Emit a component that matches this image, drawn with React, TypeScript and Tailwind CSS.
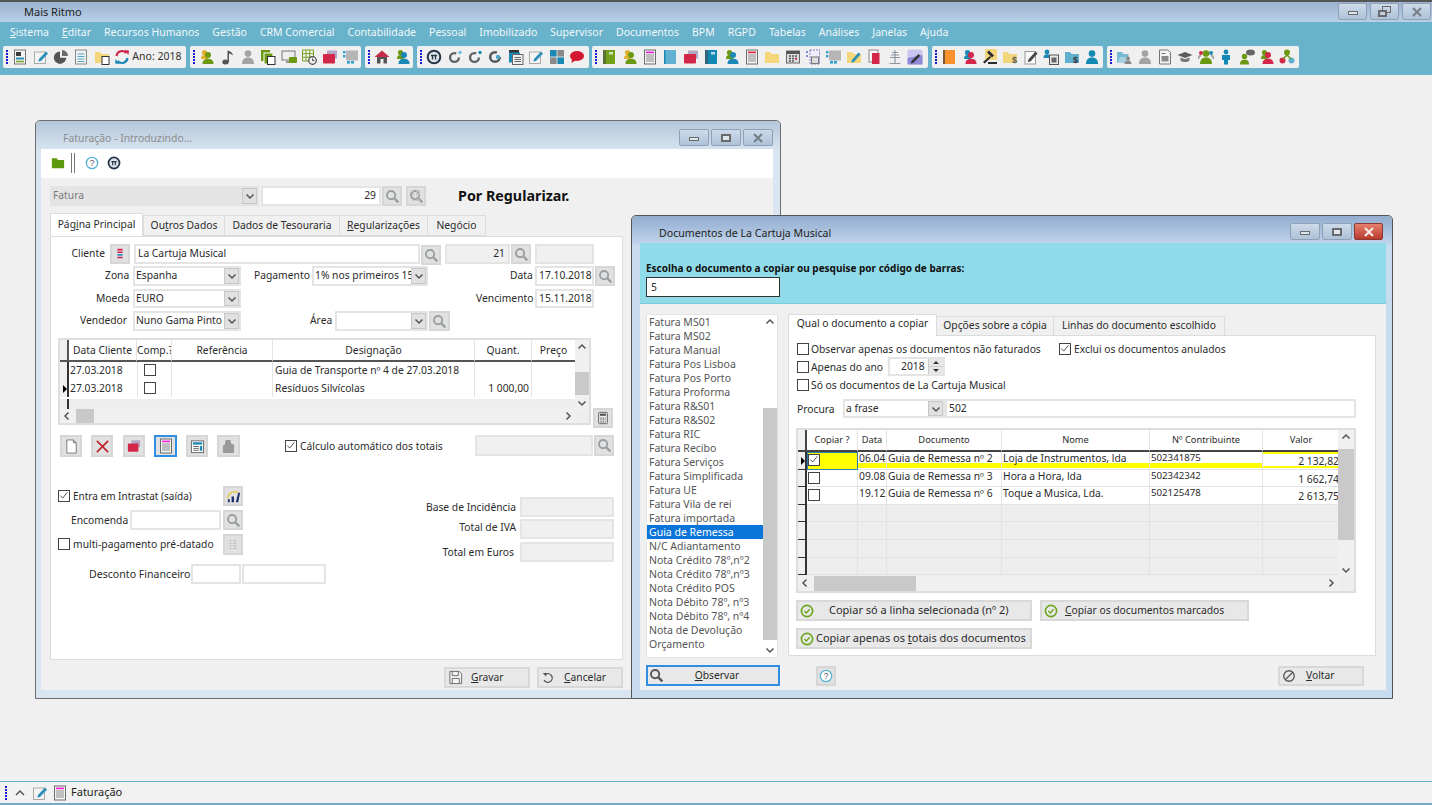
import React from "react";

type P = { className?: string; children?: React.ReactNode };

const Txt = ({ className = "", children }: P) => (
  <span className={`absolute whitespace-nowrap leading-[14px] ${className}`}>{children}</span>
);

const Field = ({ className = "", children }: P) => (
  <div className={`absolute border-2 border-[#e4e4e4] bg-white pl-[2px] leading-[15px] overflow-hidden whitespace-nowrap ${className}`}>{children}</div>
);

const Chevron = ({ up, left, right }: { up?: boolean; left?: boolean; right?: boolean }) => (
  <svg viewBox="0 0 10 10" className={`h-[10px] w-[10px] ${up ? "rotate-180" : ""} ${left ? "rotate-90" : ""} ${right ? "-rotate-90" : ""}`}>
    <path d="M1.5 3.5 5 7l3.5-3.5" fill="none" stroke="#555" strokeWidth="1.5" />
  </svg>
);

const Combo = ({ className = "", children }: P) => (
  <div className={`absolute border-2 border-[#e4e4e4] bg-white pl-[1px] leading-[15px] whitespace-nowrap overflow-hidden ${className}`}>
    {children}
    <div className="absolute right-0 top-0 bottom-0 w-[15px] bg-[#e1e1e1] border border-[#c8c8c8] flex items-center justify-center">
      <Chevron />
    </div>
  </div>
);

const Lens = ({ color = "#9a9fa2" }: { color?: string }) => (
  <svg viewBox="0 0 16 16" className="h-[15px] w-[15px]">
    <circle cx="6.5" cy="6.5" r="4.4" fill="none" stroke={color} strokeWidth="2" />
    <path d="m10 10 4.2 4.2" stroke={color} strokeWidth="2.6" />
  </svg>
);

const Btn = ({ className = "", children }: P) => (
  <div className={`absolute flex items-center justify-center bg-[#e1e1e1] border-2 border-[#d6d6d6] ${className}`}>{children}</div>
);

const Search = ({ className = "" }: P) => (
  <Btn className={className}>
    <Lens />
  </Btn>
);

const Check = ({ className = "", on }: { className?: string; on?: boolean }) => (
  <div className={`absolute h-[12px] w-[12px] border border-[#444] bg-white ${className}`}>
    {on && (
      <svg viewBox="0 0 12 12" className="h-[10px] w-[10px]">
        <path d="m1.5 5.5 3 3L10 1.5" fill="none" stroke="#555" strokeWidth="1.2" />
      </svg>
    )}
  </div>
);

const OkIcon = () => (
  <svg viewBox="0 0 16 16" className="h-[14px] w-[14px] shrink-0">
    <circle cx="8" cy="8" r="6.4" fill="none" stroke="#6aa51b" strokeWidth="1.8" />
    <path d="m5 8 2.2 2.2L11 6" fill="none" stroke="#6aa51b" strokeWidth="1.5" />
  </svg>
);

const Person = ({ c }: { c: string }) => (
  <>
    <circle cx="8" cy="4.6" r="3.3" fill={c} />
    <path d="M2 15c0-4.2 2-6.4 6-6.4s6 2.2 6 6.4z" fill={c} />
  </>
);

const Person2 = ({ a, b }: { a: string; b: string }) => (
  <>
    <circle cx="5.5" cy="3.6" r="2.6" fill={a} />
    <path d="M2 10c0-3 1-4 3.5-4S9 7 9 10z" fill={a} />
    <circle cx="9" cy="6" r="3" fill={b} />
    <path d="M3.5 15c0-3.6 2-5.2 5.5-5.2s5.5 1.6 5.5 5.2z" fill={b} />
  </>
);

const Book = ({ c }: { c: string }) => (
  <>
    <rect x="2" y="1" width="12" height="14" fill={c} />
    <rect x="2" y="1" width="3" height="14" fill="#4b4b4b" opacity=".55" />
    <rect x="8" y="3" width="4" height="2.5" fill="#fff" opacity=".7" />
  </>
);

const Doc = ({ c }: { c: string }) => (
  <>
    <rect x="2.5" y="1" width="11" height="14" fill="#f4f4f4" stroke="#6b6b6b" />
    <rect x="4" y="2.6" width="8" height="1.6" fill={c} />
    <path d="M4 6h8M4 8h8M4 10h8M4 12h8" stroke="#8a8a8a" />
  </>
);

const Folder = ({ c }: { c: string }) => <path d="M1 3h5l1.5 2H15v9H1z" fill={c} />;

const RedFolder = () => (
  <>
    <rect x="5" y="1.5" width="10" height="8" fill="#b3a6c4" />
    <rect x="1" y="5" width="12" height="9.5" rx="1" fill="#d3274a" />
  </>
);

const Barcode = () => (
  <>
    <path d="M5 1.5v10M7 1.5v10M9 1.5v10M11 1.5v10M13 1.5v10M15 1.5v10" stroke="#7b7b7b" />
    <rect x="1" y="2" width="2.4" height="2.4" fill="#2f9fd0" />
    <rect x="1" y="6" width="2.4" height="2.4" fill="#2f9fd0" />
    <rect x="5" y="12" width="3" height="2.6" fill="#2f9fd0" />
    <rect x="9" y="12" width="3" height="2.6" fill="#2f9fd0" />
  </>
);

const Gear = ({ c }: { c: string }) => (
  <>
    <circle cx="7.5" cy="8.5" r="4.4" fill="none" stroke="#5f6468" strokeWidth="2.4" strokeDasharray="22 5.6" />
    <circle cx="13" cy="3.5" r="1.7" fill={c} />
  </>
);

const Note = () => (
  <>
    <rect x="1.5" y="3" width="11" height="11.5" fill="#f3f3f3" stroke="#a9a9a9" />
    <path d="m6 10 7-7.5 2 2L8 12l-2.6.6z" fill="#2a8fb8" />
  </>
);

const Pi = () => (
  <>
    <circle cx="8" cy="8" r="6.3" fill="#dfe3e8" stroke="#25364a" strokeWidth="2" />
    <path d="M5 6.5h6M6.5 6.5v4M9.5 6.5v4" stroke="#25364a" strokeWidth="1.3" />
  </>
);

const icons: Record<string, React.ReactNode> = {
  sheet: (
    <>
      <rect x="2.5" y="1" width="11" height="14" fill="#f3f3f3" stroke="#777" />
      <rect x="4" y="3" width="5" height="4" fill="#3c3c3c" />
      <rect x="4" y="8.5" width="8" height="2" fill="#2a8fb8" />
      <path d="M4 12.5h8" stroke="#7aa21a" strokeWidth="1.5" />
    </>
  ),
  note: <Note />,
  pie: (
    <>
      <path d="M7 2.5a6.2 6.2 0 1 0 6.2 6.2H7z" fill="#555" />
      <path d="M9 1a6 6 0 0 1 6 6H9z" fill="#6b6b6b" />
    </>
  ),
  page: (
    <>
      <rect x="2.5" y="1" width="11" height="14" fill="#f2f2f2" stroke="#8a8a8a" />
      <path d="M4.5 5h7M4.5 7.5h7M4.5 10h7M4.5 12.5h7" stroke="#5aa7c7" />
    </>
  ),
  folderdoc: (
    <>
      <Folder c="#f3d57c" />
      <rect x="8" y="7.5" width="7" height="8" fill="#fff" stroke="#333" />
    </>
  ),
  sync: (
    <>
      <path d="M2.5 7A5.6 5.6 0 0 1 12.3 4" fill="none" stroke="#d3274a" strokeWidth="2.2" />
      <path d="m10.5 1 4.5.6-.6 4.500z" fill="#d3274a" />
      <path d="M13.5 9A5.6 5.6 0 0 1 3.7 12" fill="none" stroke="#1c88b5" strokeWidth="2.2" />
      <path d="m5.5 15-4.5-.6.6-4.500z" fill="#1c88b5" />
    </>
  ),
  pYG: <Person2 a="#e0b12e" b="#6b9a12" />,
  music: (
    <>
      <ellipse cx="5.5" cy="13" rx="3.2" ry="2.5" fill="#555" />
      <path d="M7.5 13V1.5c2.5.6 5 2 5.5 5-1.3-1.2-3-1.8-4-2V13z" fill="#555" />
    </>
  ),
  pGray: <Person c="#a3a3a3" />,
  docsG: (
    <>
      <rect x="1" y="1" width="9" height="11" fill="#6b9a12" />
      <rect x="4" y="4" width="9" height="11" fill="#6b9a12" stroke="#fff" />
      <rect x="7.5" y="7.5" width="7.5" height="8" fill="#fff" stroke="#333" />
    </>
  ),
  screen: (
    <>
      <rect x="1" y="2" width="13" height="9" fill="#eee" stroke="#777" />
      <path d="M5 13h5" stroke="#777" strokeWidth="1.5" />
      <rect x="8" y="8" width="8" height="6" rx="1" fill="#6b9a12" />
    </>
  ),
  calclock: (
    <>
      <path d="M1.5 1h11v11h-11zM5 1v11M8.6 1v11M1.5 4.6h11M1.5 8.2h11" fill="none" stroke="#7c9f24" />
      <circle cx="11.5" cy="11.5" r="3.8" fill="#eee" stroke="#444" strokeWidth="1.2" />
      <path d="M11.5 9.5v2h1.8" stroke="#444" fill="none" />
    </>
  ),
  redfolder: <RedFolder />,
  barcode: <Barcode />,
  home: (
    <>
      <path d="M0.5 8 8 1.5 15.5 8z" fill="#c62c47" />
      <path d="M3 8h10v6.5H9.5V10h-3v4.5H3z" fill="#555" />
    </>
  ),
  pTeal2: <Person2 a="#6b9a12" b="#1c88b5" />,
  pi: <Pi />,
  gear1: <Gear c="#6cc0dc" />,
  gear2: <Gear c="#1c88b5" />,
  gear3: (
    <>
      <circle cx="8" cy="8" r="4.8" fill="none" stroke="#55595d" strokeWidth="2.6" strokeDasharray="24 6" />
      <circle cx="11" cy="8" r="2.2" fill="#4aa6c9" />
    </>
  ),
  docs: (
    <>
      <rect x="1" y="1" width="10" height="5" fill="#333" />
      <rect x="1" y="3.5" width="11" height="10" fill="#1c88b5" />
      <rect x="4.5" y="5.5" width="10.5" height="10" fill="#f0f0f0" stroke="#666" />
      <path d="M6.5 8.5h6.5M6.5 10.5h6.5M6.5 12.5h6.5" stroke="#666" />
    </>
  ),
  squares: (
    <>
      <rect x="1" y="1" width="6.6" height="6.6" fill="#1c88b5" />
      <rect x="8.4" y="1" width="6.6" height="6.6" fill="#8a8a8a" />
      <rect x="1" y="8.4" width="6.6" height="6.6" fill="#8a8a8a" />
      <rect x="8.4" y="8.4" width="6.6" height="6.6" fill="#1c88b5" />
    </>
  ),
  speech: (
    <>
      <ellipse cx="8" cy="7" rx="7" ry="5" fill="#d3172f" />
      <path d="m3 10-.5 4 4.5-3z" fill="#d3172f" />
    </>
  ),
  bookG: <Book c="#72a01a" />,
  docPink: <Doc c="#f31bd6" />,
  bookB: (
    <>
      <rect x="2" y="1" width="12" height="14" fill="#61b2d2" />
      <rect x="2" y="1" width="1.5" height="14" fill="#1c88b5" />
    </>
  ),
  bookT: <Book c="#1488b4" />,
  docRed: <Doc c="#e11d2a" />,
  folderY: <Folder c="#f5d67a" />,
  cal: (
    <>
      <rect x="1.5" y="2" width="13" height="12" fill="#ddd" stroke="#666" />
      <rect x="1.5" y="2" width="13" height="3" fill="#555" />
      <path d="M4 7h2M7 7h2M10 7h2M4 9.5h2M7 9.5h2M10 9.5h2M4 12h2M7 12h2" stroke="#555" strokeWidth="1.4" />
      <rect x="10" y="9" width="2" height="1.6" fill="#c62c47" />
    </>
  ),
  dotdoc: (
    <>
      <rect x="5" y="1" width="9.5" height="14" fill="#eef" stroke="#8a7fc0" strokeDasharray="2 1" />
      <rect x="6.5" y="8" width="7" height="6.5" fill="#ddd" stroke="#777" />
      <rect x="1" y="2" width="2" height="2" fill="#7a8fd0" />
      <rect x="1" y="6" width="2" height="2" fill="#7a8fd0" />
    </>
  ),
  notefolder: (
    <>
      <Folder c="#f3d57c" />
      <path d="m6 11 6.5-7.5 2 1.8L8 13l-2.6.4z" fill="#2a8fb8" />
    </>
  ),
  reddoc: (
    <>
      <rect x="3" y="1" width="9" height="12" fill="#f6f6f6" stroke="#888" />
      <path d="M6 4h7.5v11H6z" fill="#d3274a" />
    </>
  ),
  antenna: <path d="M8 1v13M5 3.5h6M4 6h8M3 8.5h10M2.5 14.5h11" stroke="#8e9aa3" fill="none" strokeWidth="1.2" />,
  pen: (
    <>
      <rect x="0.5" y="0.5" width="15" height="15" rx="2" fill="#c8c5ee" />
      <path d="M.5 9 15.5 6v9.5H.5z" fill="#8f8ad6" />
      <path d="m4.5 12 7-7 1.8 1.8-7 7-2.500.6z" fill="#333" />
    </>
  ),
  bookO: (
    <>
      <rect x="2" y="1" width="12" height="14" fill="#f7922d" />
      <rect x="2" y="1" width="2" height="14" fill="#7a5a3a" />
    </>
  ),
  pRed2: <Person2 a="#1c88b5" b="#d3274a" />,
  gavel: (
    <>
      <rect x="3" y="0" width="12" height="11" fill="#f3d57c" />
      <path d="m7 1.5 5 5-2 2-5-5zM8 7 1 13l1.6 1.6L9 8.500z" fill="#2a2a2a" />
      <rect x="6" y="13" width="9" height="2" fill="#2a2a2a" />
    </>
  ),
  folderD: (
    <>
      <Folder c="#f3d57c" />
      <text x="10" y="13.5" fontSize="9" fontWeight="700" fill="#555" fontFamily="Liberation Sans, sans-serif">$</text>
    </>
  ),
  noteDark: (
    <>
      <rect x="2" y="2.5" width="10.5" height="12.5" fill="#fafafa" stroke="#9a9a9a" />
      <path d="m5.5 10.5 7-8 2 2-7 8-2.600.5z" fill="#444" />
    </>
  ),
  pDocs: (
    <>
      <circle cx="4" cy="3" r="2.4" fill="#1c88b5" />
      <path d="M0.5 9c0-3 1.5-3.800 3.5-3.800S7.500 6 7.500 9z" fill="#1c88b5" />
      <rect x="6.5" y="6" width="9" height="9.5" fill="#e8e8e8" stroke="#555" />
      <rect x="8.5" y="8.5" width="5" height="5" fill="#666" />
    </>
  ),
  folderT: (
    <>
      <Folder c="#5fb0cf" />
      <text x="9" y="13.5" fontSize="9" fontWeight="700" fill="#333" fontFamily="Liberation Sans, sans-serif">$</text>
    </>
  ),
  pTeal: <Person c="#1488b4" />,
  folderP: (
    <>
      <path d="M1 3h5l1.5 2h5v3H5l-2 6H1z" fill="#78b9d3" />
      <path d="M4 8h10l-2 6H1.500z" fill="#a5d2e3" />
      <circle cx="12" cy="9.5" r="2" fill="#8a8a8a" />
      <path d="M8.5 15c0-2.500 1.200-3.500 3.500-3.500s3.500 1 3.500 3.500z" fill="#8a8a8a" />
    </>
  ),
  docCalc: (
    <>
      <path d="M2.5 1H11l2.500 2.500V15h-11z" fill="#f3f3f3" stroke="#777" />
      <rect x="4.5" y="7" width="7" height="5.5" fill="#8a8a8a" />
      <path d="M4.5 4.500h4" stroke="#777" />
    </>
  ),
  cap: (
    <>
      <path d="M0.5 6 8 3l7.500 3L8 9z" fill="#5c5c5c" />
      <path d="M3.5 8.500v3.300c2.500 1.600 6.500 1.600 9 0V8.500L8 10.300z" fill="#777" />
    </>
  ),
  group: (
    <>
      <circle cx="3" cy="4" r="2" fill="#d3274a" />
      <circle cx="13" cy="4" r="2" fill="#1c88b5" />
      <path d="M0.5 10c0-2.500.8-3.500 2.500-3.500M15.500 10c0-2.500-.8-3.500-2.500-3.500" stroke="#999" strokeWidth="1.5" fill="none" />
      <Person c="#6b9a12" />
    </>
  ),
  man: (
    <>
      <circle cx="8" cy="3" r="2.4" fill="#1488b4" />
      <path d="M4 6h8v5h-2v4.500H6V11H4z" fill="#1488b4" />
    </>
  ),
  pSpeech: (
    <>
      <circle cx="5.5" cy="7.5" r="2.7" fill="#6b9a12" />
      <path d="M1 15.500c0-3.500 1.500-4.800 4.500-4.800s4.500 1.300 4.500 4.800z" fill="#6b9a12" />
      <ellipse cx="11.5" cy="3.5" rx="4.5" ry="3" fill="#666" />
    </>
  ),
  pGR: <Person2 a="#6b9a12" b="#d3274a" />,
  org: (
    <>
      <circle cx="8" cy="3.5" r="3" fill="#6b9a12" />
      <circle cx="3.5" cy="11.5" r="3" fill="#d3274a" />
      <circle cx="12.5" cy="11.5" r="3" fill="#61b2d2" />
      <path d="M8 6 4 10M8 6l4 4" stroke="#6b9a12" strokeWidth="1.5" />
    </>
  ),
  help: (
    <>
      <circle cx="8" cy="8" r="6.5" fill="#fff" stroke="#5bb4d2" strokeWidth="1.5" />
      <text x="5.5" y="11.5" fontSize="9.5" fill="#555" fontFamily="Liberation Sans, sans-serif">?</text>
    </>
  ),
  folderGreen: <path d="M1 2.5h5.500L8 4.500h7v9.500H1z" fill="#5f9a0e" />,
  blank: <path d="M3 1h7l3 3v11H3zM10 1v3h3" fill="#fff" stroke="#777" />,
  cross: <path d="m2 2 12 12M14 2 2 14" stroke="#c0262d" strokeWidth="1.8" />,
  docBlue: (
    <>
      <rect x="1.5" y="2" width="13" height="12.5" fill="#fff" stroke="#666" />
      <rect x="3" y="3.5" width="10" height="2.5" fill="#1c88b5" />
      <path d="M3.500 8h6M3.500 10h6M3.500 12h6" stroke="#666" />
      <rect x="10.5" y="7.5" width="2.5" height="5" fill="#1c88b5" />
    </>
  ),
  hold: <path d="M5 1h5l1 4 3 1v9H2V7l2-1z" fill="#9a9a9a" />,
  calc: (
    <>
      <rect x="3" y="1.5" width="10" height="13" rx="1" fill="#eee" stroke="#555" />
      <rect x="4.5" y="3" width="7" height="2.5" fill="#555" />
      <path d="M5 8h6M5 10h6M5 12.500h6" stroke="#555" strokeWidth="1.3" strokeDasharray="1.5 1" />
    </>
  ),
  chart: (
    <>
      <path d="M2 10a7 7 0 0 1 12-5" fill="none" stroke="#e2c11c" strokeWidth="1.6" strokeDasharray="2 1" />
      <path d="M2 14h2v-3H2zM6 14h2.500V8H6zM10.500 14H13l2-10h-2z" fill="#1c2f6f" />
    </>
  ),
  list: <path d="M4 3h2M4 6h2M4 9h2M4 12h2M8 3h4M8 6h4M8 9h4M8 12h4" stroke="#bdbdbd" strokeWidth="1.4" />,
  listRed: (
    <>
      <path d="M5 3h6M5 6h6" stroke="#d3274a" strokeWidth="1.8" />
      <path d="M5 9h6" stroke="#1c88b5" strokeWidth="1.8" />
      <path d="M5 12h6" stroke="#d3274a" strokeWidth="1.8" />
    </>
  ),
  save: (
    <>
      <path d="M2 1.500h10l2.500 2.500v10.500H2z" fill="#f4f4f4" stroke="#666" />
      <path d="M4.500 1.500v4.500h6.500V1.500M4.500 14.500V9h7.500v5.500" fill="none" stroke="#666" />
    </>
  ),
  undo: (
    <>
      <path d="M5.500 3.500a5 5 0 1 1-2 7" fill="none" stroke="#555" strokeWidth="1.5" />
      <path d="M2 2.500 6.500 2 5.800 6.200z" fill="#555" />
    </>
  ),
  stop: (
    <>
      <circle cx="8" cy="8" r="6" fill="none" stroke="#555" strokeWidth="1.5" />
      <path d="m4 12 8-8" stroke="#555" strokeWidth="1.5" />
    </>
  ),
};

const Ico = ({ n, className = "h-[16px] w-[16px]" }: { n: string; className?: string }) => (
  <svg viewBox="0 0 16 16" className={`shrink-0 ${className}`}>
    {icons[n]}
  </svg>
);

const Grip = () => (
  <div className="flex h-[14px] w-[2px] shrink-0 flex-col justify-between">
    {[0, 1, 2, 3, 4].map((i) => (
      <div key={i} className="h-[2px] w-[2px] bg-[#1a1ad0]" />
    ))}
  </div>
);

const Toolbar = ({ className = "", items, children }: { className?: string; items: string[]; children?: React.ReactNode }) => (
  <div className={`absolute top-[46px] flex h-[22px] items-center rounded-[2px] bg-[#f0f0f0] pl-[3px] ${className}`}>
    <Grip />
    <div className="ml-[2px] flex items-center">
      {items.map((n, i) => (
        <div key={i} className="flex w-[20.4px] justify-center">
          <Ico n={n} />
        </div>
      ))}
    </div>
    {children}
  </div>
);

const WinBtn = ({ className = "", kind, glyph = "border-[#6a6a6a]", stroke = "#77808a" }: { className?: string; kind: "min" | "max" | "rest" | "close"; glyph?: string; stroke?: string }) => (
  <div className={`absolute flex h-[17px] items-center justify-center rounded-[2px] border border-[#8ea1b6] bg-gradient-to-b from-[#cddaea] to-[#aec2d8] ${className}`}>
    {kind === "min" && <div className={`mt-[2px] h-[4px] w-[10px] border bg-[#dfe5ec] ${glyph}`} />}
    {kind === "max" && <div className={`h-[8px] w-[10px] border-2 bg-[#dfe5ec] ${glyph}`} />}
    {kind === "rest" && (
      <div className="relative h-[11px] w-[13px]">
        <div className={`absolute right-0 top-0 h-[7px] w-[9px] border ${glyph}`} />
        <div className={`absolute bottom-0 left-0 h-[7px] w-[9px] border-2 bg-[#c3d0df] ${glyph}`} />
      </div>
    )}
    {kind === "close" && (
      <svg viewBox="0 0 12 10" className="h-[10px] w-[12px]">
        <path d="m2 1 8 8M10 1 2 9" stroke={stroke} strokeWidth="2.2" />
      </svg>
    )}
  </div>
);

const VBar = ({ className = "", thumb = "" }: { className?: string; thumb?: string }) => (
  <div className={`absolute bg-[#f0f0f0] ${className}`}>
    <div className="absolute left-0 right-0 top-[2px] flex justify-center">
      <Chevron up />
    </div>
    <div className={`absolute left-[0px] right-[0px] bg-[#c9c9c9] ${thumb}`} />
    <div className="absolute bottom-[2px] left-0 right-0 flex justify-center">
      <Chevron />
    </div>
  </div>
);

const HBar = ({ className = "", thumb = "" }: { className?: string; thumb?: string }) => (
  <div className={`absolute bg-[#f0f0f0] ${className}`}>
    <div className="absolute left-[2px] top-[2px]">
      <Chevron left />
    </div>
    <div className={`absolute top-0 bottom-0 bg-[#c9c9c9] ${thumb}`} />
    <div className="absolute right-[2px] top-[2px]">
      <Chevron right />
    </div>
  </div>
);

const CmdBtn = ({ className = "", icon, children, tx = "" }: { className?: string; icon: React.ReactNode; children: React.ReactNode; tx?: string }) => (
  <div className={`absolute flex items-center bg-[#e8e8e8] border-2 border-[#d8d8d8] ${className}`}>
    <div className="ml-[1px] flex w-[16px] justify-center">{icon}</div>
    <span className={`whitespace-nowrap ${tx}`}>{children}</span>
  </div>
);

const lista = [
  "Fatura MS01", "Fatura MS02", "Fatura Manual", "Fatura Pos Lisboa", "Fatura Pos Porto", "Fatura Proforma",
  "Fatura R&S01", "Fatura R&S02", "Fatura RIC", "Fatura Recibo", "Fatura Serviços", "Fatura Simplificada",
  "Fatura UE", "Fatura Vila de rei", "Fatura importada", "Guia de Remessa", "N/C Adiantamento",
  "Nota Crédito 78º,nº2", "Nota Crédito 78º,nº3", "Nota Crédito POS", "Nota Débito 78º, nº3",
  "Nota Débito 78º, nº4", "Nota de Devolução", "Orçamento",
];

const docs = [
  ["06.04.", "Guia de Remessa nº 2", "Loja de Instrumentos, lda", "502341875", "2 132,82"],
  ["09.08.", "Guia de Remessa nº 3", "Hora a Hora, lda", "502342342", "1 662,74"],
  ["19.12.", "Guia de Remessa nº 6", "Toque a Musica, Lda.", "502125478", "2 613,75"],
];

const Faturacao = () => (
  <div className="absolute left-[35px] top-[120px] h-[579px] w-[746px] rounded-t-[5px] border border-[#6e6e6e] bg-[#d9e6f2] text-[#2b2b2b]">
    <div className="absolute inset-x-0 top-0 h-[29px] rounded-t-[5px] bg-gradient-to-b from-[#b4c6da] to-[#d7e4f0]" />
    <Txt className="left-[27px] top-[10px] text-[#8c8c8c] text-[10.4px]">Faturação - Introduzindo...</Txt>
    <WinBtn kind="min" className="left-[643px] top-[8px] w-[30px]" />
    <WinBtn kind="max" className="left-[675px] top-[8px] w-[30px]" />
    <WinBtn kind="close" className="left-[707px] top-[8px] w-[30px]" />

    <div className="absolute left-[5px] right-[7px] top-[28px] h-[541px] bg-[#f0f0f0]">
      <div className="absolute inset-x-0 top-0 flex h-[29px] items-center bg-white pb-[2px] pl-[10px]">
        <Ico n="folderGreen" className="h-[14px] w-[14px]" />
        <div className="ml-[6px] h-[20px] w-[4px] border-x border-[#777]" />
        <Ico n="help" className="ml-[10px] h-[14px] w-[14px]" />
        <Ico n="pi" className="ml-[8px] h-[14px] w-[14px]" />
      </div>

      <Combo className="left-[9px] top-[37px] h-[20px] w-[209px] !bg-[#e4e4e4] text-[#7a7a7a]">
        Fatura
      </Combo>
      <Field className="left-[220px] top-[37px] h-[20px] w-[120px] pr-[3px] text-right">29</Field>
      <Search className="left-[341px] top-[37px] h-[20px] w-[20px]" />
      <Btn className="left-[365px] top-[37px] h-[20px] w-[20px]">
        <Ico n="list" className="absolute h-[16px] w-[16px]" />
        <Lens />
      </Btn>
      <Txt className="left-[417px] top-[40px] text-[14.3px] font-bold text-[#111]">Por Regularizar.</Txt>

      {/* separadores */}
      <div className="absolute left-[9px] top-[64px] z-10 flex h-[23px] w-[93px] justify-center border border-b-0 border-[#dcdcdc] bg-white pt-[3px]">
        <span>P&aacute;g<u>i</u>na Principal</span>
      </div>
      <div className="absolute left-[102px] top-[66px] flex h-[21px] w-[82px] justify-center border border-[#dcdcdc] pt-[2px]">
        <span>Ou<u>t</u>ros Dados</span>
      </div>
      <div className="absolute left-[184px] top-[66px] flex h-[21px] w-[115px] justify-center border border-l-0 border-[#dcdcdc] pt-[2px]">
        Dados de Tesouraria
      </div>
      <div className="absolute left-[299px] top-[66px] flex h-[21px] w-[88px] justify-center border border-l-0 border-[#dcdcdc] pt-[2px]">
        <span><u>R</u>egularizações</span>
      </div>
      <div className="absolute left-[387px] top-[66px] flex h-[21px] w-[58px] justify-center border border-l-0 border-[#dcdcdc] pt-[2px]">
        Negócio
      </div>

      <div className="absolute left-[9px] top-[87px] h-[424px] w-[573px] border border-[#dcdcdc] bg-white">
        <Txt className="right-[517px] top-[9px]">Cliente</Txt>
        <Btn className="left-[59px] top-[7px] h-[20px] w-[20px]">
          <Ico n="listRed" className="h-[14px] w-[14px]" />
        </Btn>
        <Field className="left-[83px] top-[7px] h-[20px] w-[286px]">La Cartuja Musical</Field>
        <Search className="left-[370px] top-[8px] h-[20px] w-[20px]" />
        <Field className="left-[394px] top-[7px] h-[20px] w-[65px] !bg-[#f0f0f0] pr-[3px] text-right">21</Field>
        <Search className="left-[460px] top-[7px] h-[20px] w-[20px]" />
        <Field className="left-[484px] top-[7px] h-[20px] w-[59px] !bg-[#f0f0f0]" />

        <Txt className="left-[54px] top-[31px]">Zona</Txt>
        <Combo className="left-[82px] top-[29px] h-[20px] w-[108px]">Espanha</Combo>
        <Txt className="left-[203px] top-[31px]">Pagamento</Txt>
        <Combo className="left-[261px] top-[29px] h-[20px] w-[116px]">1% nos primeiros 15 dias</Combo>
        <Txt className="left-[459px] top-[31px]">Data</Txt>
        <Field className="left-[484px] top-[29px] h-[20px] w-[59px]">17.10.2018</Field>
        <Search className="left-[544px] top-[29px] h-[20px] w-[20px]" />

        <Txt className="left-[45px] top-[54px]">Moeda</Txt>
        <Combo className="left-[82px] top-[52px] h-[19px] w-[108px]">EURO</Combo>
        <Txt className="left-[425px] top-[54px]">Vencimento</Txt>
        <Field className="left-[484px] top-[52px] h-[19px] w-[59px]">15.11.2018</Field>

        <Txt className="left-[29px] top-[76px]">Vendedor</Txt>
        <Combo className="left-[82px] top-[74px] h-[20px] w-[108px]">Nuno Gama Pinto</Combo>
        <Txt className="left-[259px] top-[76px]">Área</Txt>
        <Combo className="left-[284px] top-[74px] h-[20px] w-[93px]" />
        <Search className="left-[378px] top-[74px] h-[20px] w-[21px]" />

        {/* linhas */}
        <div className="absolute left-[7px] top-[101px] h-[87px] w-[533px] border-2 border-[#dedede] bg-[#eeeeee]">
          <div className="grid h-[59px] grid-cols-[9px_68px_35px_101px_202px_57px_44px] grid-rows-[22px_18px_17px] bg-white text-center">
            {["", "Data Cliente", "Comp.?", "Referência", "Designação", "Quant.", "Preço"].map((h, i) => (
              <div key={i} className={`overflow-hidden whitespace-nowrap border-b-2 border-[#555] leading-[20px] ${i === 0 ? "border-r-2 bg-[#f0f0f0]" : "border-r border-r-[#e4e4e4]"}`}>
                {h}
              </div>
            ))}
            <div className="border-r-2 border-[#333] bg-[#f0f0f0]" />
            <div className="pl-[1px] text-left leading-[17px]">27.03.2018</div>
            <div className="relative border-x border-[#e4e4e4]"><Check className="left-[6px] top-[2px]" /></div>
            <div className="border-r border-[#e4e4e4]" />
            <div className="border-r border-[#e4e4e4] pl-[2px] text-left leading-[17px] whitespace-nowrap">Guia de Transporte nº 4 de 27.03.2018</div>
            <div className="border-r border-[#e4e4e4]" />
            <div />
            <div className="relative border-r-2 border-[#333] bg-[#f0f0f0]">
              <div className="absolute right-0 top-[5px] h-0 w-0 border-y-[4px] border-l-[4px] border-y-transparent border-l-black" />
            </div>
            <div className="pl-[1px] text-left leading-[17px]">27.03.2018</div>
            <div className="relative border-x border-[#e4e4e4]"><Check className="left-[6px] top-[2px]" /></div>
            <div className="border-r border-[#e4e4e4]" />
            <div className="border-r border-[#e4e4e4] pl-[2px] text-left leading-[17px]">Resíduos Silvícolas</div>
            <div className="border-r border-[#e4e4e4] pr-[2px] text-right leading-[17px]">1 000,00</div>
            <div />
          </div>
          <div className="absolute left-[7px] top-[59px] h-[12px] w-[2px] bg-[#333]" />
          <VBar className="right-0 top-0 h-[70px] w-[14px]" thumb="top-[32px] h-[23px]" />
          <HBar className="bottom-0 left-0 right-[14px] h-[14px]" thumb="left-[16px] w-[18px]" />
        </div>
        <Btn className="left-[542px] top-[171px] h-[20px] w-[20px]"><Ico n="calc" className="h-[14px] w-[14px]" /></Btn>

        <Btn className="left-[9px] top-[198px] h-[22px] w-[22px]"><Ico n="blank" className="h-[15px] w-[15px]" /></Btn>
        <Btn className="left-[40px] top-[198px] h-[22px] w-[22px]"><Ico n="cross" className="h-[15px] w-[15px]" /></Btn>
        <Btn className="left-[72px] top-[198px] h-[22px] w-[22px]"><Ico n="redfolder" className="h-[14px] w-[14px]" /></Btn>
        <Btn className="left-[103px] top-[198px] h-[22px] w-[23px] !border-[#2f8fe0] bg-[#dbe9f6]"><Ico n="docPink" className="h-[16px] w-[16px]" /></Btn>
        <Btn className="left-[135px] top-[198px] h-[22px] w-[22px]"><Ico n="docBlue" className="h-[15px] w-[15px]" /></Btn>
        <Btn className="left-[166px] top-[198px] h-[22px] w-[23px]"><Ico n="hold" className="h-[15px] w-[15px]" /></Btn>

        <Check on className="left-[234px] top-[203px]" />
        <Txt className="left-[249px] top-[202px]">Cálculo automático dos totais</Txt>
        <Field className="left-[424px] top-[198px] h-[21px] w-[118px] !bg-[#f0f0f0]" />
        <Search className="left-[543px] top-[198px] h-[21px] w-[20px]" />

        <Check on className="left-[7px] top-[253px]" />
        <Txt className="left-[22px] top-[252px] text-[10px]">Entra em Intrastat (saída)</Txt>
        <Btn className="left-[172px] top-[249px] h-[20px] w-[20px]"><Ico n="chart" className="h-[15px] w-[15px]" /></Btn>
        <Txt className="left-[20px] top-[276px]">Encomenda</Txt>
        <Field className="left-[79px] top-[273px] h-[20px] w-[91px]" />
        <Search className="left-[172px] top-[273px] h-[20px] w-[20px]" />
        <Check className="left-[7px] top-[301px]" />
        <Txt className="left-[22px] top-[300px]">multi-pagamento pré-datado</Txt>
        <Btn className="left-[172px] top-[297px] h-[21px] w-[20px]"><Ico n="list" className="h-[14px] w-[14px]" /></Btn>
        <Txt className="left-[38px] top-[330px] text-[10.6px]">Desconto Financeiro</Txt>
        <Field className="left-[140px] top-[327px] h-[20px] w-[50px]" />
        <Field className="left-[191px] top-[327px] h-[20px] w-[84px]" />

        <Txt className="right-[106px] top-[263px]">Base de Incidência</Txt>
        <Field className="left-[469px] top-[260px] h-[20px] w-[94px] !bg-[#f0f0f0]" />
        <Txt className="right-[106px] top-[283px]">Total de IVA</Txt>
        <Field className="left-[469px] top-[282px] h-[20px] w-[94px] !bg-[#f0f0f0]" />
        <Txt className="right-[108px] top-[308px]">Total em Euros</Txt>
        <Field className="left-[469px] top-[305px] h-[20px] w-[94px] !bg-[#f0f0f0]" />
      </div>

      <CmdBtn className="left-[403px] top-[518px] h-[21px] w-[86px]" icon={<Ico n="save" className="h-[15px] w-[15px]" />} tx="ml-[8px]">
        <u>G</u>ravar
      </CmdBtn>
      <CmdBtn className="left-[496px] top-[518px] h-[21px] w-[86px]" icon={<Ico n="undo" className="h-[14px] w-[14px]" />} tx="ml-[8px]">
        <u>C</u>ancelar
      </CmdBtn>
    </div>
  </div>
);

const Documentos = () => (
  <div className="absolute left-[631px] top-[215px] h-[484px] w-[762px] rounded-t-[5px] border border-[#555] bg-[#c8dcf0] text-[#2b2b2b]">
    <div className="absolute inset-x-0 top-0 h-[29px] rounded-t-[5px] bg-gradient-to-b from-[#93add0] to-[#c2d6ec]" />
    <Txt className="left-[27px] top-[10px] text-[10.6px] text-[#222]">Documentos de La Cartuja Musical</Txt>
    <WinBtn kind="min" className="left-[658px] top-[7px] w-[30px]" />
    <WinBtn kind="max" className="left-[690px] top-[7px] w-[30px]" />
    <WinBtn kind="close" stroke="#f4e9e6" className="left-[722px] top-[7px] w-[29px] !border-[#8a3a30] !from-[#e6806e] !to-[#b8392c]" />

    <div className="absolute left-[8px] right-[6px] top-[27px] h-[447px] bg-[#f0f0f0]">
      <div className="absolute inset-x-0 top-0 h-[61px] border-b border-[#7ccbdc] bg-[#90dbe9]">
        <Txt className="left-[6px] top-[18px] text-[10px] font-bold text-[#111]">Escolha o documento a copiar ou pesquise por código de barras:</Txt>
        <div className="absolute left-[6px] top-[34px] h-[20px] w-[134px] border border-[#333] bg-white pl-[4px] leading-[19px]">5</div>
      </div>

      <div className="absolute left-[6px] top-[71px] h-[344px] w-[132px] border border-[#e4e4e4] bg-white text-[10.5px]">
        {lista.map((t) => (
          <div key={t} className={`h-[14px] w-[117px] pl-[2px] leading-[14px] whitespace-nowrap ${t === "Guia de Remessa" ? "bg-[#0a74d8] text-white" : "text-[#555]"}`}>
            {t}
          </div>
        ))}
        <VBar className="right-0 top-0 bottom-0 w-[14px] !bg-white" thumb="top-[93px] h-[232px]" />
      </div>

      <div className="absolute left-[6px] top-[422px] flex h-[21px] w-[134px] items-center justify-center border-2 border-[#2f8fe0] bg-[#e8e8e8] pl-[8px]">
        <div className="absolute left-[1px]"><Lens color="#555" /></div>
        <span><u>O</u>bservar</span>
      </div>
      <Btn className="left-[176px] top-[423px] h-[20px] w-[20px]"><Ico n="help" className="h-[14px] w-[14px]" /></Btn>
      <CmdBtn className="left-[638px] top-[423px] h-[20px] w-[86px]" icon={<Ico n="stop" className="h-[14px] w-[14px]" />} tx="ml-[9px]">
        <u>V</u>oltar
      </CmdBtn>

      {/* separadores */}
      <div className="absolute left-[148px] top-[71px] z-10 flex h-[22px] w-[149px] justify-center border border-b-0 border-[#dcdcdc] bg-white pt-[1px]">Qual o documento a copiar</div>
      <div className="absolute left-[296px] top-[73px] flex h-[20px] w-[118px] justify-center border border-[#dcdcdc] pt-[1px]">Opções sobre a cópia</div>
      <div className="absolute left-[414px] top-[73px] flex h-[20px] w-[171px] justify-center border border-l-0 border-[#dcdcdc] pt-[1px]">Linhas do documento escolhido</div>

      <div className="absolute left-[148px] top-[92px] h-[321px] w-[588px] border border-[#dcdcdc] bg-white">
        <Check className="left-[8px] top-[7px]" />
        <Txt className="left-[22px] top-[6px]">Observar apenas os documentos não faturados</Txt>
        <Check on className="left-[270px] top-[7px]" />
        <Txt className="left-[285px] top-[6px]">Exclui os documentos anulados</Txt>
        <Check className="left-[8px] top-[25px]" />
        <Txt className="left-[22px] top-[24px]">Apenas do ano</Txt>
        <div className="absolute left-[99px] top-[21px] h-[19px] w-[57px] border-2 border-[#e4e4e4] bg-white pl-[11px] leading-[15px]">
          2018
          <div className="absolute right-0 top-0 flex h-full w-[15px] flex-col border-l border-[#ccc] bg-[#e8e8e8]">
            <div className="flex h-1/2 items-center justify-center border-b border-[#ccc]"><div className="h-0 w-0 border-x-[3px] border-b-[3px] border-x-transparent border-b-[#333]" /></div>
            <div className="flex h-1/2 items-center justify-center"><div className="h-0 w-0 border-x-[3px] border-t-[3px] border-x-transparent border-t-[#333]" /></div>
          </div>
        </div>
        <Check className="left-[8px] top-[43px]" />
        <Txt className="left-[22px] top-[42px]">Só os documentos de La Cartuja Musical</Txt>
        <Txt className="left-[8px] top-[66px]">Procura</Txt>
        <Combo className="left-[54px] top-[63px] h-[19px] w-[102px]">a frase</Combo>
        <Field className="left-[156px] top-[63px] h-[19px] w-[411px]">502</Field>

        {/* documentos */}
        <div className="absolute left-[7px] top-[92px] h-[165px] w-[560px] border-2 border-[#dedede] bg-[#eeeeee]">
          <div className="grid grid-cols-[9px_51px_29px_115px_148px_113px_77px] grid-rows-[22px_repeat(7,17.6px)]">
            {["", "Copiar ?", "Data", "Documento", "Nome", "Nº Contribuinte", "Valor"].map((h, i) => (
              <div key={i} className={`whitespace-nowrap border-b-2 border-[#444] bg-white text-center text-[9.3px] leading-[20px] ${i === 0 ? "border-r-2 !bg-[#f0f0f0]" : "border-r border-r-[#e4e4e4]"}`}>
                {h}
              </div>
            ))}
            {docs.map((d, r) => (
              <React.Fragment key={r}>
                <div className="relative border-r-2 border-b border-[#333] bg-[#f0f0f0]">
                  {r === 0 && <div className="absolute right-0 top-[5px] h-0 w-0 border-y-[4px] border-l-[4px] border-y-transparent border-l-black" />}
                </div>
                <div className={`relative border-r border-b border-[#e4e4e4] ${r === 0 ? "bg-[#ffff00] outline outline-1 -outline-offset-1 outline-[#2f7fb0]" : "bg-white"}`}>
                  <Check on={r === 0} className="left-[1px] top-[2px]" />
                </div>
                {d.slice(0, 4).map((t, c) => (
                  <div key={c} className={`relative overflow-hidden whitespace-nowrap border-r border-b border-[#e4e4e4] pl-[1px] leading-[12px] ${c === 3 ? "text-[9.7px]" : ""} ${r === 0 ? "bg-[linear-gradient(#fff_0,#fff_11px,#ffff00_11px,#ffff00_16px,#fff_16px)]" : "bg-white"}`}>
                    {t}
                  </div>
                ))}
                <div className={`overflow-hidden whitespace-nowrap border-b border-[#e4e4e4] pr-[1px] pt-[2px] text-right leading-[15px] ${r === 0 ? "bg-[linear-gradient(#ffff00_0,#ffff00_2px,#fff_2px,#fff_14px,#ffff00_14px,#ffff00_16px,#fff_16px)]" : "bg-white"}`}>
                  {d[4]}
                </div>
              </React.Fragment>
            ))}
            {[0, 1, 2, 3].map((r) => (
              <React.Fragment key={r}>
                <div className="border-r-2 border-b border-[#333] bg-[#f0f0f0]" />
                <div className="border-r border-b border-[#e2e2e2]" />
                <div className="border-r border-b border-[#e2e2e2]" />
                <div className="border-r border-b border-[#e2e2e2]" />
                <div className="border-r border-b border-[#e2e2e2]" />
                <div className="border-r border-b border-[#e2e2e2]" />
                <div className="border-b border-[#e2e2e2]" />
              </React.Fragment>
            ))}
          </div>
          <VBar className="right-0 top-0 h-[147px] w-[16px]" thumb="top-[19px] h-[91px]" />
          <HBar className="bottom-0 left-0 right-[16px] h-[15px]" thumb="left-[16px] w-[102px]" />
        </div>

        <CmdBtn className="left-[7px] top-[264px] h-[21px] w-[236px]" icon={<OkIcon />} tx="ml-[14px] text-[11px]">Copiar só a linha selecionada (nº 2)</CmdBtn>
        <CmdBtn className="left-[251px] top-[264px] h-[21px] w-[209px]" icon={<OkIcon />} tx="ml-[6px]"><u>C</u>opiar os documentos marcados</CmdBtn>
        <CmdBtn className="left-[7px] top-[292px] h-[21px] w-[236px]" icon={<OkIcon />} tx="ml-[1px] text-[11px]">Copiar apenas os <u>t</u>otais dos documentos</CmdBtn>
      </div>
    </div>
  </div>
);

const menus: React.ReactNode[] = [
  <><u>S</u>istema</>, <><u>E</u>ditar</>, "Recursos Humanos", "Gestão", "CRM Comercial", "Contabilidade", "Pessoal", "Imobilizado",
  "Supervisor", "Documentos", "BPM", "RGPD", "Tabelas", "Análises", <><u>J</u>anelas</>, "Ajuda",
];

export default function App() {
  return (
    <div className="relative h-[805px] w-[1432px] overflow-hidden bg-[#f0f0f0] font-['Noto_Sans',sans-serif] text-[10.3px] text-[#222]">
      <div className="absolute inset-x-0 top-0 h-[22px] border-t-2 border-[#555] bg-gradient-to-b from-[#9bb3cf] to-[#b9d0e7]">
        <Txt className="left-[24px] top-[3px] text-[11px] text-[#222]">Mais Ritmo</Txt>
        <WinBtn kind="min" className="left-[1338px] top-[1px] w-[29px]" />
        <WinBtn kind="rest" className="left-[1370px] top-[1px] w-[29px]" />
        <WinBtn kind="close" className="left-[1402px] top-[1px] w-[29px]" />
      </div>

      <div className="absolute inset-x-0 top-[22px] h-[53px] bg-[#68b2cb]">
        <div className="flex h-[22px] items-center gap-[13px] pl-[10px] text-[10.5px] text-[#f2f7f9]">
          {menus.map((m, i) => (
            <span key={i} className="whitespace-nowrap">{m}</span>
          ))}
        </div>
      </div>

      <Toolbar className="left-[3px] w-[183px]" items={["sheet", "note", "pie", "page", "folderdoc", "sync"]}>
        <span className="whitespace-nowrap text-[10.5px] text-[#333]">Ano: 2018</span>
      </Toolbar>
      <Toolbar className="left-[190px] w-[171px]" items={["pYG", "music", "pGray", "docsG", "screen", "calclock", "redfolder", "barcode"]} />
      <Toolbar className="left-[365px] w-[48px]" items={["home", "pTeal2"]} />
      <Toolbar className="left-[417px] w-[172px]" items={["pi", "gear1", "gear2", "gear3", "docs", "note", "squares", "speech"]} />
      <Toolbar className="left-[592px] w-[336px]" items={["bookG", "pYG", "docPink", "bookB", "redfolder", "bookT", "pTeal2", "docRed", "folderY", "cal", "dotdoc", "barcode", "notefolder", "reddoc", "antenna", "pen"]} />
      <Toolbar className="left-[932px] w-[171px]" items={["bookO", "pRed2", "gavel", "folderD", "noteDark", "pDocs", "folderT", "pTeal"]} />
      <Toolbar className="left-[1107px] w-[192px]" items={["folderP", "pGray", "docCalc", "cap", "group", "man", "pSpeech", "pGR", "org"]} />

      <Faturacao />
      <Documentos />

      <div className="absolute inset-x-0 bottom-0 flex h-[24px] items-center border-t border-b-2 border-t-[#68b2cb] border-b-[#7aa9c8] bg-[#f2f2f2] pl-[5px]">
        <Grip />
        <svg viewBox="0 0 10 10" className="ml-[8px] h-[10px] w-[10px]"><path d="m1 7 4-4 4 4" fill="none" stroke="#555" strokeWidth="1.5" /></svg>
        <Ico n="note" className="ml-[7px] h-[16px] w-[16px]" />
        <Ico n="docPink" className="ml-[4px] h-[16px] w-[16px]" />
        <span className="ml-[3px] text-[11px] text-[#222]">Faturação</span>
      </div>
    </div>
  );
}
